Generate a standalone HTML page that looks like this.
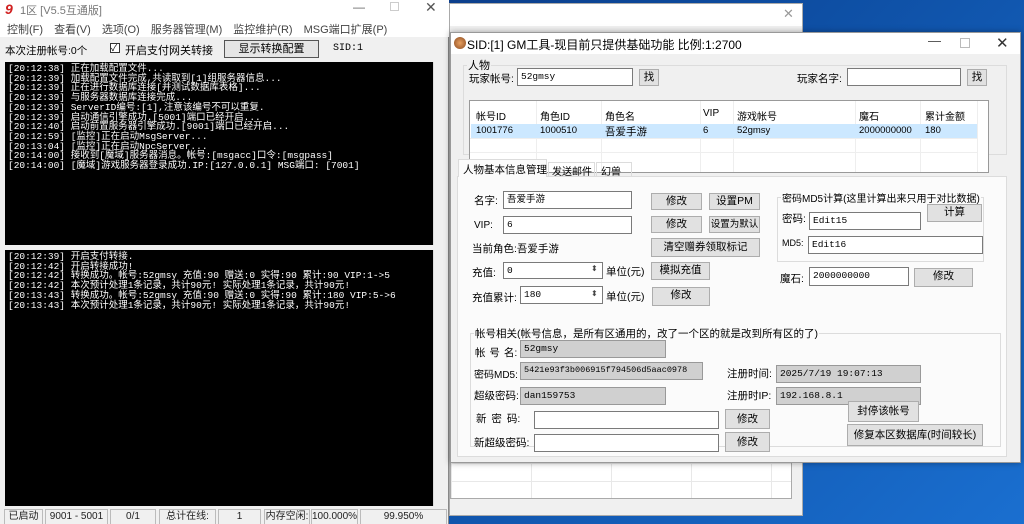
<!DOCTYPE html><html><head><meta charset="utf-8"><style>
*{margin:0;padding:0;box-sizing:border-box}
html,body{width:1024px;height:524px;overflow:hidden}
body{position:relative;background:linear-gradient(135deg,#0a2c6e 0%,#0d4ca0 50%,#1a6fd0 100%);font-family:"Liberation Sans","Noto Sans CJK SC",sans-serif;font-size:10.5px;color:#000}
.a{position:absolute;white-space:nowrap}
.btn{position:absolute;background:#e1e1e1;border:1px solid #adadad;text-align:center;font-size:10.5px;line-height:15px;overflow:hidden;white-space:nowrap}
.inp{position:absolute;background:#fff;border:1px solid #7a7a7a;font-size:9.5px;padding-left:3px;line-height:15px;font-family:"Liberation Mono","Noto Sans CJK SC",monospace;overflow:hidden;white-space:nowrap}
.g{background:#d0d0d0;border-color:#999}
.con{position:absolute;background:#000;color:#fff;font-family:"Liberation Mono","Noto Sans CJK SC",monospace;font-size:9.5px;line-height:9.7px;padding:2px 0 0 3px;white-space:pre;overflow:hidden}
.sb{position:absolute;background:#f0f0f0;border-left:1px solid #ddd}
.st{position:absolute;top:509px;height:15px;border:1px solid #bbb;border-bottom:none;font-size:10px;line-height:14px;text-align:center;color:#222;overflow:hidden;white-space:nowrap}
</style></head><body>
<div class="a" style="left:0;top:0;width:449px;height:524px;background:#f0f0f0;border-right:1px solid #888"></div>
<div class="a" style="left:0;top:0;width:449px;height:18px;background:#fff"></div>
<div class="a" style="left:5px;top:1px;color:#d02020;font-weight:bold;font-style:italic;font-size:14px">9</div>
<div class="a" style="left:20px;top:2px;color:#777;font-size:11px">1区 [V5.5互通版]</div>
<div class="a" style="left:353px;top:0;color:#666;font-size:12px">—</div>
<div class="a" style="left:390px;top:2px;width:9px;height:9px;border:1px solid #ccc"></div>
<div class="a" style="left:425px;top:-1px;color:#555;font-size:14px">✕</div>
<div class="a" style="left:0;top:18px;width:449px;height:19px;background:#fff"></div>
<div class="a" style="left:7px;top:21px;color:#444;word-spacing:8px;font-size:11px">控制(F) 查看(V) 选项(O) 服务器管理(M) 监控维护(R) MSG端口扩展(P)</div>
<div class="a" style="left:5px;top:43px">本次注册帐号:0个</div>
<div class="a" style="left:110px;top:43px;width:10px;height:10px;border:1px solid #333;background:#fff;font-size:9px;line-height:8px">✓</div>
<div class="a" style="left:125px;top:42px;font-size:11px">开启支付网关转接</div>
<div class="btn" style="left:224px;top:40px;width:95px;height:18px;border:1px solid #555;background:#e5e5e5;font-size:11px;line-height:16px">显示转换配置</div>
<div class="a" style="left:333px;top:43px;font-family:'Liberation Mono',monospace;font-size:10px">SID:1</div>
<div class="con" style="left:5px;top:62px;width:428px;height:183px">[20:12:38] 正在加载配置文件...
[20:12:39] 加载配置文件完成,共读取到[1]组服务器信息...
[20:12:39] 正在进行数据库连接[并测试数据库表格]...
[20:12:39] 与服务器数据库连接完成...
[20:12:39] ServerID编号:[1],注意该编号不可以重复.
[20:12:39] 启动通信引擎成功.[5001]端口已经开启...
[20:12:40] 启动前置服务器引擎成功.[9001]端口已经开启...
[20:12:59] [监控]正在启动MsgServer...
[20:13:04] [监控]正在启动NpcServer...
[20:14:00] 接收到[魔域]服务器消息。帐号:[msgacc]口令:[msgpass]
[20:14:00] [魔域]游戏服务器登录成功.IP:[127.0.0.1] MSG端口: [7001]</div>
<div class="sb" style="left:433px;top:62px;width:14px;height:183px"></div>
<div class="con" style="left:5px;top:250px;width:428px;height:256px">[20:12:39] 开启支付转接.
[20:12:42] 开启转接成功!
[20:12:42] 转换成功。帐号:52gmsy 充值:90 赠送:0 实得:90 累计:90 VIP:1->5
[20:12:42] 本次预计处理1条记录，共计90元! 实际处理1条记录，共计90元!
[20:13:43] 转换成功。帐号:52gmsy 充值:90 赠送:0 实得:90 累计:180 VIP:5->6
[20:13:43] 本次预计处理1条记录，共计90元! 实际处理1条记录，共计90元!</div>
<div class="sb" style="left:433px;top:250px;width:14px;height:256px"></div>
<div class="st" style="left:4px;width:39px">已启动</div>
<div class="st" style="left:45px;width:63px">9001 - 5001</div>
<div class="st" style="left:110px;width:46px">0/1</div>
<div class="st" style="left:159px;width:57px">总计在线:</div>
<div class="st" style="left:218px;width:43px">1</div>
<div class="st" style="left:264px;width:46px">内存空闲:</div>
<div class="st" style="left:311px;width:47px">100.000%</div>
<div class="st" style="left:360px;width:87px">99.950%</div>
<div class="a" style="left:449px;top:3px;width:354px;height:513px;background:#f0f0f0;border:1px solid #aaa"></div>
<div class="a" style="left:450px;top:4px;width:352px;height:22px;background:#fff"></div>
<div class="a" style="left:783px;top:6px;color:#999;font-size:13px">✕</div>
<div class="a" style="left:450px;top:462px;width:342px;height:37px;background:#fff;border:1px solid #aaa;background-image:linear-gradient(#e8e8e8 1px,transparent 1px),linear-gradient(90deg,#e8e8e8 1px,transparent 1px);background-size:100% 18px,80px 100%"></div>
<div class="a" style="left:450px;top:32px;width:571px;height:431px;background:#f0f0f0;border:1px solid #999;box-shadow:0 0 6px rgba(0,0,0,.35)"></div>
<div class="a" style="left:451px;top:33px;width:569px;height:21px;background:#fff"></div>
<div class="a" style="left:454px;top:37px;width:12px;height:12px;border-radius:50%;background:radial-gradient(#e8a060,#8a4a20)"></div>
<div class="a" style="left:467px;top:36px;font-size:12px">SID:[1] GM工具-现目前只提供基础功能 比例:1:2700</div>
<div class="a" style="left:928px;top:33px;color:#444;font-size:13px">—</div>
<div class="a" style="left:960px;top:38px;width:10px;height:10px;border:1px solid #bbb"></div>
<div class="a" style="left:996px;top:34px;color:#333;font-size:15px">✕</div>
<div class="a" style="left:463px;top:65px;width:544px;height:90px;border:1px solid #dcdcdc"></div>
<div class="a" style="left:467px;top:57px;font-size:11px;background:#f0f0f0;padding:0 1px">人物</div>
<div class="a" style="left:469px;top:71px">玩家帐号:</div>
<div class="inp" style="left:517px;top:68px;width:116px;height:18px">52gmsy</div>
<div class="btn" style="left:639px;top:69px;width:20px;height:17px">找</div>
<div class="a" style="left:797px;top:71px">玩家名字:</div>
<div class="inp" style="left:847px;top:68px;width:114px;height:18px"></div>
<div class="btn" style="left:967px;top:69px;width:20px;height:17px">找</div>
<div class="a" style="left:469px;top:100px;width:520px;height:73px;background:#fff;border:1px solid #999;background-image:linear-gradient(90deg,transparent 66px,#eee 66px,#eee 67px,transparent 67px,transparent 131px,#eee 131px,#eee 132px,transparent 132px,transparent 230px,#eee 230px,#eee 231px,transparent 231px,transparent 263px,#eee 263px,#eee 264px,transparent 264px,transparent 385px,#eee 385px,#eee 386px,transparent 386px,transparent 450px,#eee 450px,#eee 451px,transparent 451px,transparent 507px,#eee 507px,#eee 508px,transparent 508px)"></div>
<div class="a" style="left:470px;top:138px;width:507px;height:1px;background:#eee"></div>
<div class="a" style="left:470px;top:152px;width:507px;height:1px;background:#eee"></div>
<div class="a" style="left:471px;top:124px;width:506px;height:14px;background:#cce8ff"></div>
<div class="a" style="left:476px;top:108px;font-size:10px">帐号ID</div><div class="a" style="left:540px;top:108px;font-size:10px">角色ID</div><div class="a" style="left:605px;top:108px;font-size:10px">角色名</div><div class="a" style="left:703px;top:108px;font-size:10px">VIP</div><div class="a" style="left:737px;top:108px;font-size:10px">游戏帐号</div><div class="a" style="left:859px;top:108px;font-size:10px">魔石</div><div class="a" style="left:925px;top:108px;font-size:10px">累计金额</div>
<div class="a" style="left:476px;top:125px;font-size:9.5px">1001776</div><div class="a" style="left:540px;top:125px;font-size:9.5px">1000510</div><div class="a" style="left:605px;top:124px;font-size:10.5px">吾爱手游</div><div class="a" style="left:703px;top:125px;font-size:9.5px">6</div><div class="a" style="left:737px;top:125px;font-size:9.5px">52gmsy</div><div class="a" style="left:859px;top:125px;font-size:9.5px">2000000000</div><div class="a" style="left:925px;top:125px;font-size:9.5px">180</div>
<div class="a" style="left:457px;top:176px;width:550px;height:281px;background:#fbfbfb;border:1px solid #dcdcdc"></div>
<div class="a" style="left:458px;top:159px;width:89px;height:18px;background:#fbfbfb;border:1px solid #dcdcdc;border-bottom:none;padding:2px 0 0 4px;font-size:10.5px">人物基本信息管理</div>
<div class="a" style="left:548px;top:162px;width:47px;height:15px;border:1px solid #dcdcdc;border-bottom:none;padding-left:3px;font-size:10px">发送邮件</div>
<div class="a" style="left:596px;top:162px;width:36px;height:15px;border:1px solid #dcdcdc;border-bottom:none;padding-left:4px;font-size:10px">幻兽</div>
<div class="a" style="left:474px;top:193px">名字:</div>
<div class="inp" style="left:503px;top:191px;width:129px;height:18px;font-family:'Liberation Sans','Noto Sans CJK SC',sans-serif">吾爱手游</div>
<div class="btn" style="left:651px;top:193px;width:51px;height:17px">修改</div>
<div class="btn" style="left:709px;top:193px;width:51px;height:17px">设置PM</div>
<div class="a" style="left:474px;top:220px;font-size:10px">VIP:</div>
<div class="inp" style="left:503px;top:216px;width:129px;height:18px">6</div>
<div class="btn" style="left:651px;top:216px;width:51px;height:17px">修改</div>
<div class="btn" style="left:709px;top:216px;width:51px;height:17px;font-size:9.5px">设置为默认</div>
<div class="a" style="left:472px;top:241px">当前角色:吾爱手游</div>
<div class="btn" style="left:651px;top:238px;width:109px;height:19px;line-height:17px">清空赠券领取标记</div>
<div class="a" style="left:472px;top:265px">充值:</div>
<div class="inp" style="left:503px;top:262px;width:100px;height:17px">0</div>
<div class="a" style="left:591px;top:264px;font-size:8px;color:#444">⬍</div>
<div class="a" style="left:606px;top:264px">单位(元)</div>
<div class="btn" style="left:651px;top:262px;width:59px;height:18px">模拟充值</div>
<div class="a" style="left:472px;top:290px">充值累计:</div>
<div class="inp" style="left:520px;top:286px;width:83px;height:18px">180</div>
<div class="a" style="left:591px;top:289px;font-size:8px;color:#444">⬍</div>
<div class="a" style="left:606px;top:289px">单位(元)</div>
<div class="btn" style="left:652px;top:287px;width:58px;height:19px">修改</div>
<div class="a" style="left:777px;top:197px;width:207px;height:65px;border:1px solid #dcdcdc"></div>
<div class="a" style="left:781px;top:190px;background:#fbfbfb;padding:0 1px;font-size:10px">密码MD5计算(这里计算出来只用于对比数据)</div>
<div class="a" style="left:782px;top:211px">密码:</div>
<div class="inp" style="left:809px;top:212px;width:112px;height:18px">Edit15</div>
<div class="btn" style="left:927px;top:204px;width:55px;height:18px">计算</div>
<div class="a" style="left:782px;top:238px;font-size:9px">MD5:</div>
<div class="inp" style="left:808px;top:236px;width:175px;height:18px">Edit16</div>
<div class="a" style="left:780px;top:271px">魔石:</div>
<div class="inp" style="left:809px;top:267px;width:100px;height:19px">2000000000</div>
<div class="btn" style="left:914px;top:268px;width:59px;height:19px">修改</div>
<div class="a" style="left:470px;top:333px;width:531px;height:114px;border:1px solid #dcdcdc"></div>
<div class="a" style="left:474px;top:326px;background:#fbfbfb;padding:0 1px;font-size:10.5px">帐号相关(帐号信息，是所有区通用的，改了一个区的就是改到所有区的了)</div>
<div class="a" style="left:475px;top:345px;word-spacing:1px">帐 号 名:</div>
<div class="inp g" style="left:520px;top:340px;width:146px;height:18px">52gmsy</div>
<div class="a" style="left:474px;top:366px;font-size:10px">密码MD5:</div>
<div class="inp g" style="left:520px;top:362px;width:183px;height:18px;font-size:8.5px">5421e93f3b006915f794506d5aac0978</div>
<div class="a" style="left:727px;top:366px">注册时间:</div>
<div class="inp g" style="left:776px;top:365px;width:145px;height:18px">2025/7/19 19:07:13</div>
<div class="a" style="left:474px;top:388px">超级密码:</div>
<div class="inp g" style="left:520px;top:387px;width:146px;height:18px">dan159753</div>
<div class="a" style="left:727px;top:388px">注册时IP:</div>
<div class="inp g" style="left:776px;top:387px;width:145px;height:18px">192.168.8.1</div>
<div class="a" style="left:476px;top:411px;word-spacing:2px">新 密 码:</div>
<div class="inp" style="left:534px;top:411px;width:185px;height:18px"></div>
<div class="btn" style="left:725px;top:409px;width:45px;height:20px;line-height:18px">修改</div>
<div class="a" style="left:474px;top:435px">新超级密码:</div>
<div class="inp" style="left:534px;top:434px;width:185px;height:18px"></div>
<div class="btn" style="left:725px;top:432px;width:45px;height:20px;line-height:18px">修改</div>
<div class="btn" style="left:848px;top:401px;width:71px;height:21px;line-height:19px">封停该帐号</div>
<div class="btn" style="left:847px;top:424px;width:136px;height:22px;line-height:20px">修复本区数据库(时间较长)</div>
</body></html>
